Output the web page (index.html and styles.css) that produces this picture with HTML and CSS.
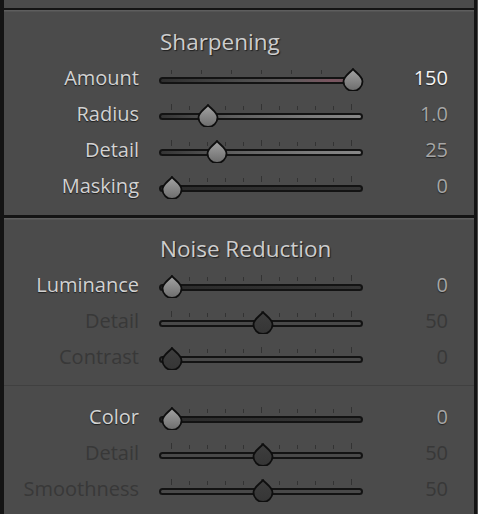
FILE: index.html
```
<!DOCTYPE html>
<html>
<head>
<meta charset="utf-8">
<link rel="stylesheet" href="styles.css">
</head>
<body>
<svg class="defs" width="0" height="0" aria-hidden="true">
  <defs>
    <linearGradient id="thumbOn" x1="0" y1="0" x2="0" y2="1">
      <stop offset="0" stop-color="#a4a4a4"/>
      <stop offset="1" stop-color="#6c6c6c"/>
    </linearGradient>
    <linearGradient id="thumbOff" x1="0" y1="0" x2="0" y2="1">
      <stop offset="0" stop-color="#3e3e3e"/>
      <stop offset="1" stop-color="#353535"/>
    </linearGradient>
  </defs>
</svg>
<div class="frame">
  <div class="stub"></div>

  <section class="panel sharpen">
    <h2 class="title">Sharpening</h2>

    <div class="row">
      <span class="label">Amount</span>
      <div class="slider">
        <div class="ticks"><i></i><i></i><i></i><i></i><i></i><i></i><i></i></div>
        <div class="track amount">
          <svg class="thumb" style="left:181px" width="22" height="23" viewBox="0 0 22 23"><path class="on" d="M11 1 C13 4 20.5 8 20.5 13.5 A9.5 9.5 0 0 1 1.5 13.5 C1.5 8 9 4 11 1 Z"/></svg>
        </div>
      </div>
      <span class="value hi">150</span>
    </div>

    <div class="row">
      <span class="label">Radius</span>
      <div class="slider">
        <div class="ticks"><i class="maj"></i><i></i><i></i><i></i><i></i><i class="maj"></i><i></i><i></i><i></i><i></i><i class="maj"></i></div>
        <div class="track lit">
          <svg class="thumb" style="left:36.2px" width="22" height="23" viewBox="0 0 22 23"><path class="on" d="M11 1 C13 4 20.5 8 20.5 13.5 A9.5 9.5 0 0 1 1.5 13.5 C1.5 8 9 4 11 1 Z"/></svg>
        </div>
      </div>
      <span class="value">1.0</span>
    </div>

    <div class="row">
      <span class="label">Detail</span>
      <div class="slider">
        <div class="ticks"><i class="maj"></i><i></i><i></i><i></i><i></i><i class="maj"></i><i></i><i></i><i></i><i></i><i class="maj"></i></div>
        <div class="track lit">
          <svg class="thumb" style="left:45.25px" width="22" height="23" viewBox="0 0 22 23"><path class="on" d="M11 1 C13 4 20.5 8 20.5 13.5 A9.5 9.5 0 0 1 1.5 13.5 C1.5 8 9 4 11 1 Z"/></svg>
        </div>
      </div>
      <span class="value">25</span>
    </div>

    <div class="row">
      <span class="label">Masking</span>
      <div class="slider">
        <div class="ticks"><i class="maj"></i><i></i><i></i><i></i><i></i><i class="maj"></i><i></i><i></i><i></i><i></i><i class="maj"></i></div>
        <div class="track dark">
          <svg class="thumb" style="left:0px" width="22" height="23" viewBox="0 0 22 23"><path class="on" d="M11 1 C13 4 20.5 8 20.5 13.5 A9.5 9.5 0 0 1 1.5 13.5 C1.5 8 9 4 11 1 Z"/></svg>
        </div>
      </div>
      <span class="value">0</span>
    </div>
  </section>

  <section class="panel noise">
    <h2 class="title">Noise Reduction</h2>

    <div class="row">
      <span class="label">Luminance</span>
      <div class="slider">
        <div class="ticks"><i class="maj"></i><i></i><i></i><i></i><i></i><i class="maj"></i><i></i><i></i><i></i><i></i><i class="maj"></i></div>
        <div class="track dark">
          <svg class="thumb" style="left:0px" width="22" height="23" viewBox="0 0 22 23"><path class="on" d="M11 1 C13 4 20.5 8 20.5 13.5 A9.5 9.5 0 0 1 1.5 13.5 C1.5 8 9 4 11 1 Z"/></svg>
        </div>
      </div>
      <span class="value">0</span>
    </div>

    <div class="row off">
      <span class="label">Detail</span>
      <div class="slider">
        <div class="ticks"><i class="maj"></i><i></i><i></i><i></i><i></i><i class="maj"></i><i></i><i></i><i></i><i></i><i class="maj"></i></div>
        <div class="track">
          <svg class="thumb" style="left:90.5px" width="22" height="23" viewBox="0 0 22 23"><path class="offp" d="M11 1 C13 4 20.5 8 20.5 13.5 A9.5 9.5 0 0 1 1.5 13.5 C1.5 8 9 4 11 1 Z"/></svg>
        </div>
      </div>
      <span class="value">50</span>
    </div>

    <div class="row off">
      <span class="label">Contrast</span>
      <div class="slider">
        <div class="ticks"><i class="maj"></i><i></i><i></i><i></i><i></i><i class="maj"></i><i></i><i></i><i></i><i></i><i class="maj"></i></div>
        <div class="track">
          <svg class="thumb" style="left:0px" width="22" height="23" viewBox="0 0 22 23"><path class="offp" d="M11 1 C13 4 20.5 8 20.5 13.5 A9.5 9.5 0 0 1 1.5 13.5 C1.5 8 9 4 11 1 Z"/></svg>
        </div>
      </div>
      <span class="value">0</span>
    </div>

    <div class="divider"></div>

    <div class="row">
      <span class="label">Color</span>
      <div class="slider">
        <div class="ticks"><i class="maj"></i><i></i><i></i><i></i><i></i><i class="maj"></i><i></i><i></i><i></i><i></i><i class="maj"></i></div>
        <div class="track dark">
          <svg class="thumb" style="left:0px" width="22" height="23" viewBox="0 0 22 23"><path class="on" d="M11 1 C13 4 20.5 8 20.5 13.5 A9.5 9.5 0 0 1 1.5 13.5 C1.5 8 9 4 11 1 Z"/></svg>
        </div>
      </div>
      <span class="value">0</span>
    </div>

    <div class="row off">
      <span class="label">Detail</span>
      <div class="slider">
        <div class="ticks"><i class="maj"></i><i></i><i></i><i></i><i></i><i class="maj"></i><i></i><i></i><i></i><i></i><i class="maj"></i></div>
        <div class="track">
          <svg class="thumb" style="left:90.5px" width="22" height="23" viewBox="0 0 22 23"><path class="offp" d="M11 1 C13 4 20.5 8 20.5 13.5 A9.5 9.5 0 0 1 1.5 13.5 C1.5 8 9 4 11 1 Z"/></svg>
        </div>
      </div>
      <span class="value">50</span>
    </div>

    <div class="row off">
      <span class="label">Smoothness</span>
      <div class="slider">
        <div class="ticks"><i class="maj"></i><i></i><i></i><i></i><i></i><i class="maj"></i><i></i><i></i><i></i><i></i><i class="maj"></i></div>
        <div class="track">
          <svg class="thumb" style="left:90.5px" width="22" height="23" viewBox="0 0 22 23"><path class="offp" d="M11 1 C13 4 20.5 8 20.5 13.5 A9.5 9.5 0 0 1 1.5 13.5 C1.5 8 9 4 11 1 Z"/></svg>
        </div>
      </div>
      <span class="value">50</span>
    </div>
  </section>
</div>
</body>
</html>
```

FILE: styles.css
```
html, body {
  margin: 0;
  padding: 0;
  background: #4b4b4b;
  height: 514px;
  overflow: hidden;
}

body {
  font-family: "Open Sans", "DejaVu Sans", sans-serif;
  padding-right: 1px;
}

.defs {
  display: block;
  width: 0;
  height: 0;
  overflow: hidden;
}

.frame {
  border-left: 4px solid #141414;
  border-right: 3px solid #141414;
  height: 514px;
  background: #4b4b4b;
}

.stub {
  height: 8px;
}

.panel {
  border-top: 2px solid #141414;
  box-shadow: inset 0 1px 0 #5e5e5e, inset 0 2px 0 #545454;
}

.sharpen {
  padding: 14px 0 11px;
}

.noise {
  border-top-width: 3px;
  padding: 13px 0 0;
}

.title {
  margin: 0;
  height: 36px;
  line-height: 36px;
  padding-left: 156px;
  font-size: 22.5px;
  font-weight: normal;
  color: #cdcdcd;
  text-shadow: 1px 1px 1px #1f1f1f;
}

.row {
  display: flex;
  align-items: center;
  height: 36px;
}

.label {
  width: 135px;
  text-align: right;
  font-size: 20px;
  line-height: 36px;
  color: #d2d2d2;
  text-shadow: 0 1px 1px #1e1e1e;
}

.slider {
  width: 204px;
  height: 20px;
  margin-left: 20px;
  display: flex;
  flex-direction: column;
}

.ticks {
  height: 6px;
  padding: 0 11.5px;
  display: flex;
  justify-content: space-between;
  align-items: flex-end;
}

.ticks i {
  display: block;
  width: 1px;
  height: 4px;
  background: #333333;
}

.ticks i.maj {
  height: 6px;
}

.track {
  position: relative;
  margin-top: 3px;
  height: 7px;
  box-sizing: border-box;
  border: 2px solid #131313;
  border-radius: 4px;
  background: #494949;
}

.track.amount {
  background: linear-gradient(to right, #2e2e2e 0%, #4c4c4c 40%, #5e5a5b 65%, #7a5560 85%, #6a5a5e 100%);
}

.track.lit {
  background: linear-gradient(to right, #353535 0%, #5e5e5e 35%, #7c7c7c 75%, #888888 100%);
}

.track.dark {
  background: linear-gradient(to right, #2b2b2b 0%, #353535 100%);
}

.thumb {
  position: absolute;
  top: -11px;
  display: block;
}

.thumb path {
  stroke: #0e0e0e;
  stroke-width: 1.8;
}

.thumb path.on {
  fill: url(#thumbOn);
}

.thumb path.offp {
  fill: url(#thumbOff);
}

.value {
  width: 85px;
  text-align: right;
  font-size: 20px;
  line-height: 36px;
  color: #a6a6a6;
  text-shadow: 0 1px 1px #222222;
}

.value.hi {
  color: #f4f4f4;
}

.row.off .label,
.row.off .value {
  color: #383838;
  text-shadow: none;
}

.divider {
  margin: 10px 0 13px;
  height: 1px;
  background: #404040;
}
```
